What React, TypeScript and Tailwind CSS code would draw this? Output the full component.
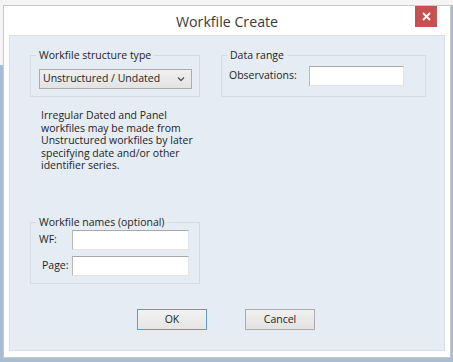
import React from "react";

function GroupBox({
  label,
  className,
  children,
}: {
  label: string;
  className: string;
  children: React.ReactNode;
}) {
  return (
    <div className={`relative border border-[#d3dbe4] ${className}`}>
      <span className="absolute -top-[9px] left-[5px] bg-[#e5ecf4] px-[3px] leading-[16px] text-[#1e1e1e]">
        {label}
      </span>
      {children}
    </div>
  );
}

function TextBox({ className }: { className: string }) {
  return (
    <input
      type="text"
      className={`h-[20px] border border-[#e3e3e3] border-t-[#a9a9a9] border-l-[#b8b8b8] bg-white outline-none ${className}`}
    />
  );
}

export default function App() {
  return (
    <div
      className="w-[453px] h-[362px] overflow-hidden bg-[#a9bdd2] text-[10.5px] text-[#1e1e1e]"
      style={{ fontFamily: '"Open Sans", "Noto Sans", sans-serif' }}
    >
      <div className="h-[5px] bg-[#f4f4f4]" />
      <div className="flex">
        <div className="w-[3px] bg-[#f4f4f4] h-[60px]" />
        <div className="w-[448px] h-[353px] border border-[#c9c9c9] bg-white flex flex-col px-[5px] pb-[6px]">
          {/* title bar */}
          <div className="h-[29px] flex items-start">
            <div className="flex-1 text-center text-[14.2px] leading-[32px] text-[#3a3a3a] pl-[30px]">
              Workfile Create
            </div>
            <button className="w-[22px] h-[21px] mr-[8px] bg-[#c75050] flex items-center justify-center">
              <svg width="9" height="9" viewBox="0 0 9 9">
                <path d="M1 1L8 8M8 1L1 8" stroke="white" strokeWidth="1.8" />
              </svg>
            </button>
          </div>

          {/* client area */}
          <div className="flex-1 bg-[#e5ecf4] border border-[#d9dfe6] pl-[20px] pt-[19px]">
            <div className="flex gap-[21px]">
              <GroupBox label="Workfile structure type" className="w-[170px] h-[42px] pt-[13px] pl-[8px]">
                <div className="w-[153px] h-[20px] border border-[#acacac] bg-gradient-to-b from-[#f0f0f0] to-[#e3e3e3] flex items-center justify-between pl-[3px] pr-[6px]">
                  <span>Unstructured / Undated</span>
                  <svg width="8" height="6" viewBox="0 0 8 6">
                    <path d="M1 1.5L4 4.5L7 1.5" stroke="#555" strokeWidth="1.3" fill="none" />
                  </svg>
                </div>
              </GroupBox>
              <GroupBox label="Data range" className="w-[205px] h-[42px] pt-[10px] pl-[7px]">
                <div className="flex items-center">
                  <span className="w-[80px]">Observations:</span>
                  <TextBox className="w-[95px]" />
                </div>
              </GroupBox>
            </div>

            <p className="mt-[12px] ml-[11px] leading-[12.6px]">
              Irregular Dated and Panel
              <br />
              workfiles may be made from
              <br />
              Unstructured workfiles by later
              <br />
              specifying date and/or other
              <br />
              identifier series.
            </p>

            <GroupBox label="Workfile names (optional)" className="mt-[50px] w-[170px] h-[62px] pt-[7px] pl-[8px]">
              <div className="flex flex-col gap-[6px]">
                <div className="flex items-center">
                  <span className="w-[33px]">WF:</span>
                  <TextBox className="w-[117px]" />
                </div>
                <div className="flex items-center">
                  <span className="w-[33px] pl-[3px]">Page:</span>
                  <TextBox className="w-[117px]" />
                </div>
              </div>
            </GroupBox>

            <div className="mt-[25px] flex gap-[38px] pl-[107px]">
              <button className="w-[70px] h-[21px] border border-[#5b9bd5] bg-gradient-to-b from-[#f2f2f2] to-[#e6e6e6]">
                OK
              </button>
              <button className="w-[70px] h-[21px] border border-[#adadad] bg-gradient-to-b from-[#f0f0f0] to-[#e2e2e2]">
                Cancel
              </button>
            </div>
          </div>
        </div>
      </div>
    </div>
  );
}
